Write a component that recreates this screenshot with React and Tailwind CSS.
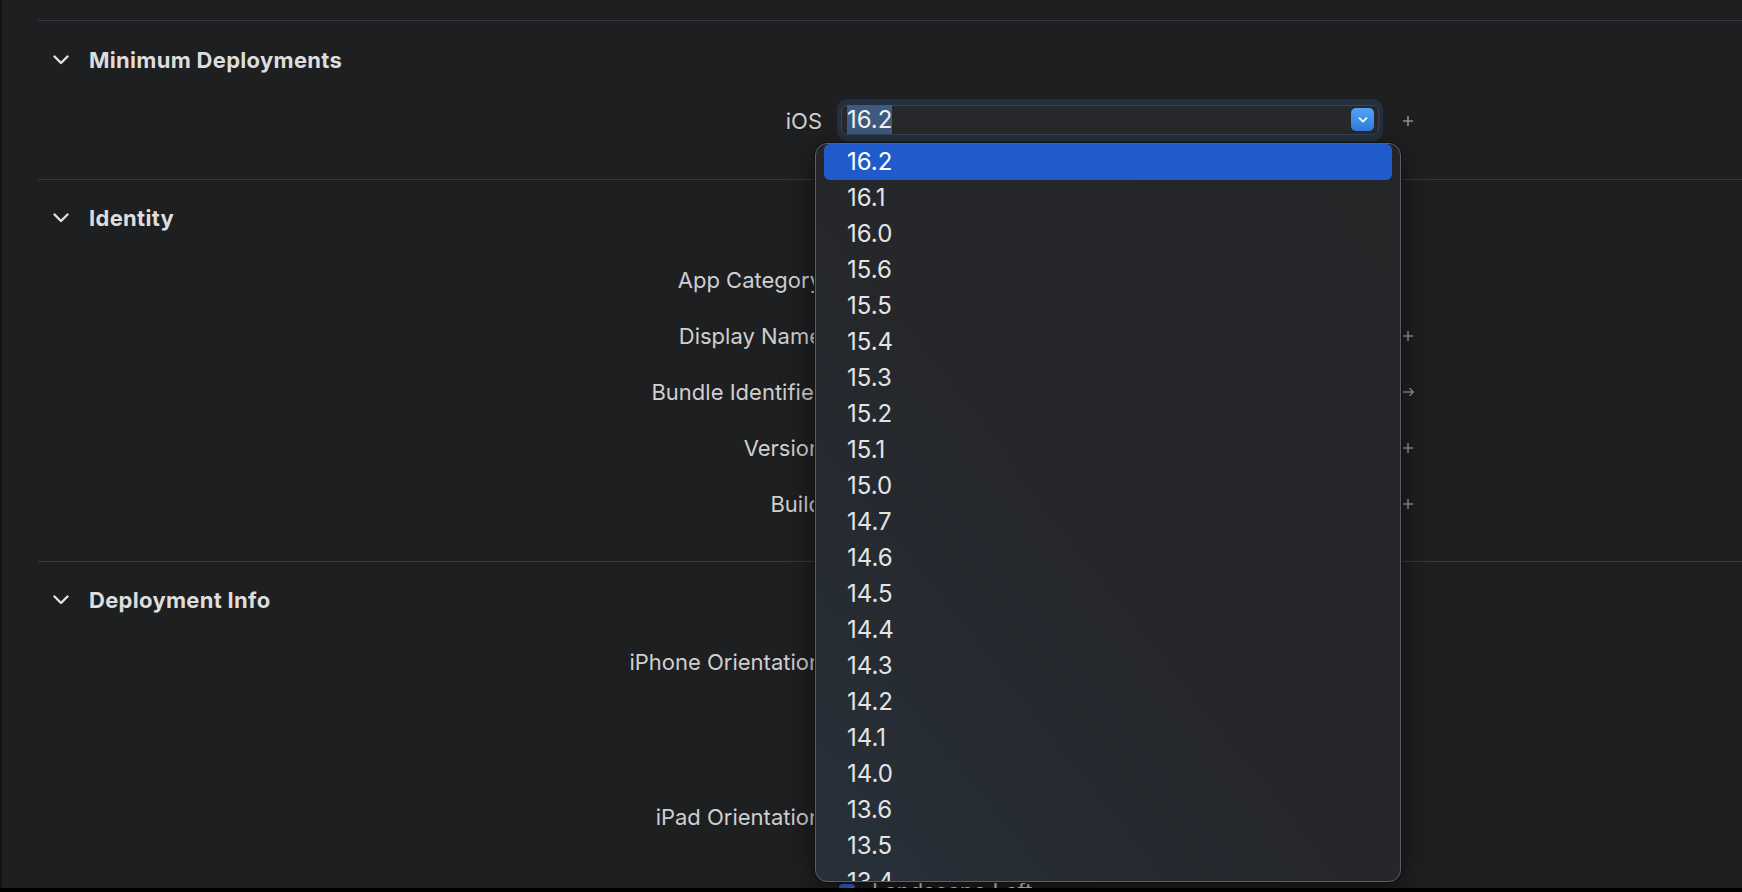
import React from "react";

const versions = [
  "16.2", "16.1", "16.0", "15.6", "15.5", "15.4", "15.3", "15.2", "15.1", "15.0",
  "14.7", "14.6", "14.5", "14.4", "14.3", "14.2", "14.1", "14.0", "13.6", "13.5", "13.4", "13.3",
];

function Chevron() {
  return (
    <svg width="16" height="10" viewBox="0 0 16 10">
      <path d="M1.5 1.5 L8 8 L14.5 1.5" fill="none" stroke="#e2e2e2" strokeWidth="2.4" strokeLinecap="round" strokeLinejoin="round" />
    </svg>
  );
}

function Plus() {
  return (
    <svg width="12" height="12" viewBox="0 0 12 12">
      <path d="M6 1v10M1 6h10" stroke="#8d8d8f" strokeWidth="1.6" />
    </svg>
  );
}

function Arrow() {
  return (
    <svg width="13" height="10" viewBox="0 0 13 10">
      <path d="M1 5h10.5M7.5 1.2L11.3 5L7.5 8.8" fill="none" stroke="#8d8d8f" strokeWidth="1.5" />
    </svg>
  );
}

function Heading({ title }) {
  return (
    <div className="flex items-center h-[40px]">
      <div className="w-[51px] pl-[15px] flex items-center">
        <Chevron />
      </div>
      <span className="text-[22px] font-bold tracking-[0.3px] text-[#dddddd]">{title}</span>
    </div>
  );
}

function Row({ label, children, accessory, height = "h-[56px]" }) {
  return (
    <div className={"flex items-center " + height}>
      <div className="w-[784px] text-right text-[22px] text-[#cfcfcf] whitespace-nowrap">{label}</div>
      <div className="ml-[15px] w-[546px] flex items-center">{children}</div>
      <div className="ml-[19px] w-[13px] flex items-center">{accessory}</div>
    </div>
  );
}

function TextField({ value }) {
  return (
    <div className="w-full h-[30px] rounded-[5px] border border-[#3b3d41] bg-[#28292c] flex items-center pl-[6px] text-[22px] text-[#dcdcdc]">
      {value}
    </div>
  );
}

function Checkbox({ label }) {
  return (
    <div className="flex items-center ml-[2px]">
      <div className="w-[16px] h-[16px] rounded-[4px] bg-[#2f6fd6] flex items-center justify-center">
        <svg width="11" height="9" viewBox="0 0 11 9">
          <path d="M1.5 4.5L4.2 7.2L9.5 1.5" fill="none" stroke="#fff" strokeWidth="2" strokeLinecap="round" strokeLinejoin="round" />
        </svg>
      </div>
      <span className="ml-[17px] text-[22px] text-[#dcdcdc]">{label}</span>
    </div>
  );
}

function VersionField() {
  return (
    <div className="w-full mb-[3px] rounded-[10px] bg-[#223040] px-[4px] py-[6px]">
      <div className="h-[30px] rounded-[6px] border border-[#3e4248] bg-[#28292c] flex items-center pl-[5px] pr-[4px]">
        <span className="h-[29px] bg-[#3d5a7f] flex items-center text-[24px] text-[#f2f2f2]">16.2</span>
        <div className="flex-1" />
        <div className="w-[23px] h-[23px] rounded-[5px] bg-gradient-to-b from-[#52a2f2] to-[#2f7fe0] flex items-center justify-center">
          <svg width="10" height="6" viewBox="0 0 10 6">
            <path d="M1.5 1.2L5 4.6L8.5 1.2" fill="none" stroke="#fff" strokeWidth="1.8" strokeLinecap="round" strokeLinejoin="round" />
          </svg>
        </div>
      </div>
    </div>
  );
}

function VersionMenu() {
  return (
    <div className="absolute left-[813px] top-[143px] w-[586px] h-[739px] rounded-[12px] border border-[#5e5f62] shadow-[0_0_0_1px_#111,0_10px_30px_rgba(0,0,0,0.5)] bg-[linear-gradient(to_top_right,#27303a,#25272b_45%,#242527)] overflow-hidden">
      {versions.map((v, i) => (
        <div key={v} className="h-[36px] px-[8px]">
          <div
            className={
              "h-full rounded-[6px] flex items-center pl-[23px] text-[24px] " +
              (i === 0 ? "bg-[#1f5bcb] text-white" : "text-[#e4e4e4]")
            }
          >
            {v}
          </div>
        </div>
      ))}
    </div>
  );
}

export default function App() {
  return (
    <div className="h-[892px] w-full bg-black flex flex-col overflow-hidden font-['Inter','Liberation_Sans',sans-serif]">
      <div className="relative h-[888px] bg-[#1e1f21] border-l-2 border-[#121315] overflow-hidden">
        <div className="h-[20px]" />
        <div className="ml-[36px]">
          {/* Minimum Deployments */}
          <div className="h-px bg-[#38393c]" />
          <div className="mt-[19px]">
            <Heading title="Minimum Deployments" />
          </div>
          <div className="mt-[19px]">
            <Row label="iOS" height="h-[44px]" accessory={<Plus />}>
              <VersionField />
            </Row>
          </div>

          {/* Identity */}
          <div className="mt-[36px] h-px bg-[#38393c]" />
          <div className="mt-[18px]">
            <Heading title="Identity" />
          </div>
          <div className="mt-[14px]">
            <Row label="App Category">
              <TextField value="None" />
            </Row>
            <Row label="Display Name" accessory={<Plus />}>
              <TextField value="" />
            </Row>
            <Row label="Bundle Identifier" accessory={<Arrow />}>
              <TextField value="com.example.app" />
            </Row>
            <Row label="Version" accessory={<Plus />}>
              <TextField value="1.0" />
            </Row>
            <Row label="Build" accessory={<Plus />}>
              <TextField value="1" />
            </Row>
          </div>

          {/* Deployment Info */}
          <div className="mt-[29px] h-px bg-[#38393c]" />
          <div className="mt-[18px]">
            <Heading title="Deployment Info" />
          </div>
          <div className="mt-[24px]">
            <Row label="iPhone Orientation" height="h-[36px]">
              <Checkbox label="Portrait" />
            </Row>
            <Row label="" height="h-[36px]">
              <Checkbox label="Upside Down" />
            </Row>
            <Row label="" height="h-[36px]">
              <Checkbox label="Landscape Left" />
            </Row>
            <Row label="" height="h-[36px]">
              <Checkbox label="Landscape Right" />
            </Row>
          </div>
          <div className="mt-[11px]">
            <Row label="iPad Orientation" height="h-[37px]">
              <Checkbox label="Portrait" />
            </Row>
            <Row label="" height="h-[37px]">
              <Checkbox label="Upside Down" />
            </Row>
            <Row label="" height="h-[37px]">
              <Checkbox label="Landscape Left" />
            </Row>
            <Row label="" height="h-[37px]">
              <Checkbox label="Landscape Right" />
            </Row>
          </div>
        </div>

        <VersionMenu />
      </div>
      <div className="h-[4px] bg-black" />
    </div>
  );
}
